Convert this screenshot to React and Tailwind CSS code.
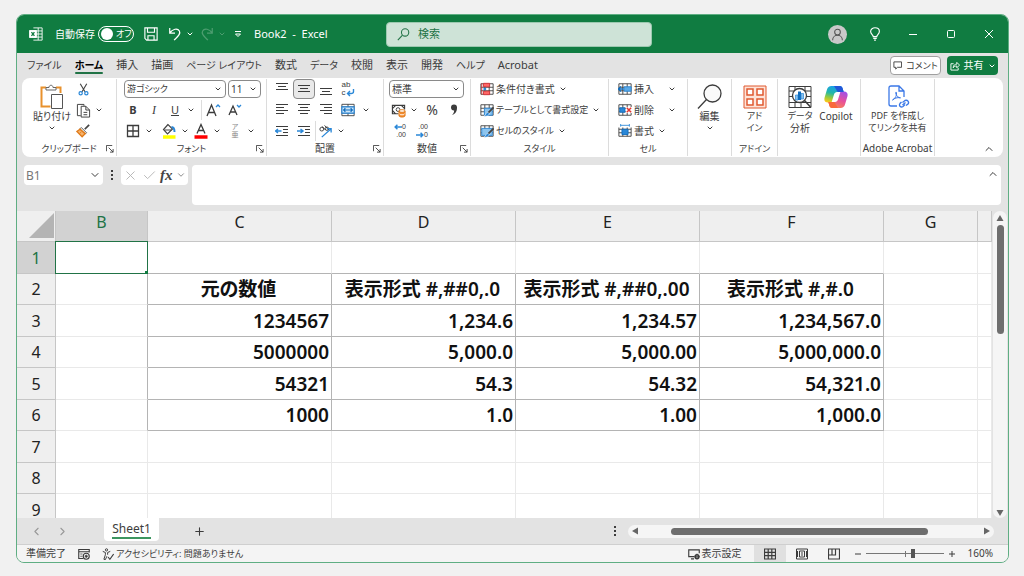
import { useState } from 'react';
import { ChevronDown, ChevronUp, ChevronLeft, ChevronRight, X, Check, Plus } from 'lucide-react';

const TABS = ['ファイル', 'ホーム', '挿入', '描画', 'ページ レイアウト', '数式', 'データ', '校閲', '表示', '開発', 'ヘルプ', 'Acrobat'];

const COLUMNS = ['B', 'C', 'D', 'E', 'F', 'G', ''];

const DATA = {
  2: ['元の数値', '表示形式 #,##0,.0', '表示形式 #,##0,.00', '表示形式 #,#.0'],
  3: ['1234567', '1,234.6', '1,234.57', '1,234,567.0'],
  4: ['5000000', '5,000.0', '5,000.00', '5,000,000.0'],
  5: ['54321', '54.3', '54.32', '54,321.0'],
  6: ['1000', '1.0', '1.00', '1,000.0'],
};

const ROWS = [1, 2, 3, 4, 5, 6, 7, 8, 9];

const isKana = (text) => (text.match(/[ぁ-んァ-ー]/g) || []).length > text.length / 2;

function Icon({ size = 16, box = 16, className = '', children }) {
  return (
    <svg
      width={size}
      height={size}
      viewBox={`0 0 ${box} ${box}`}
      fill="none"
      stroke="currentColor"
      aria-hidden="true"
      className={`shrink-0 ${className}`}
    >
      {children}
    </svg>
  );
}

function Chevron() {
  return <ChevronDown size={8} strokeWidth={3} className="shrink-0" />;
}

/* ---------- ribbon building blocks ---------- */

function Group({ label, className, launcher, children }) {
  return (
    <section className={`flex shrink-0 flex-col py-px ${className}`} aria-label={label || 'グループ'}>
      <div className="flex h-[77px] flex-col border-r border-[#dcdcdc]">
        <div className="flex h-[62px] shrink-0">{children}</div>
        <div
          className={`relative flex h-[15px] shrink-0 items-center justify-center whitespace-nowrap ${
            label && isKana(label) ? 'text-[9px]' : 'text-[10px]'
          }`}
        >
          {label}
          {launcher && (
            <button type="button" aria-label={`${label}の詳細`} className="absolute right-0.5 top-1">
              <Icon size={8} box={9}>
                <path d="M.5 7V.5H7M3 3l5 5M8 4.5V8H4.5" />
              </Icon>
            </button>
          )}
        </div>
      </div>
    </section>
  );
}

function Rows({ className = '', children }) {
  return <div className={`flex flex-col gap-px ${className}`}>{children}</div>;
}

function Row({ className = '', children }) {
  return <div className={`flex h-5 items-center ${className}`}>{children}</div>;
}

function Tool({ label, active, wide, children }) {
  return (
    <button
      type="button"
      aria-label={label}
      className={`flex h-5 items-center justify-center ${wide ? 'w-[22px]' : 'w-[18px]'} ${
        active ? 'rounded border border-[#8a8a8a] bg-[#e9e9e9]' : ''
      }`}
    >
      {children}
    </button>
  );
}

function MenuArrow({ label }) {
  return (
    <button type="button" aria-label={`${label}のメニュー`} className="flex h-5 w-3.5 items-center justify-center">
      <Chevron />
    </button>
  );
}

function Split({ label, wide, children }) {
  return (
    <>
      <Tool label={label} wide={wide}>
        {children}
      </Tool>
      <MenuArrow label={label} />
    </>
  );
}

function Divider() {
  return <span className="h-5 w-px bg-[#dcdcdc]" />;
}

function Select({ label, value, className }) {
  return (
    <div className={`relative flex h-[18px] ${className}`}>
      <select
        aria-label={label}
        defaultValue={value}
        className={`h-full w-full appearance-none rounded border border-[#8a8a8a] bg-white px-0.5 leading-4 ${
          isKana(value) ? 'text-[9px]' : 'text-[10px]'
        }`}
      >
        <option>{value}</option>
      </select>
      <ChevronDown size={8} strokeWidth={3} className="pointer-events-none absolute right-1 top-[5px]" />
    </div>
  );
}

function TextTool({ icon, label, spread }) {
  return (
    <button type="button" className={`flex h-5 items-center whitespace-nowrap ${spread ? 'w-[58px]' : ''}`}>
      {icon}
      <span className={`ml-0.5 ${isKana(label) ? 'text-[9px]' : ''}`}>{label}</span>
      <span className={spread ? 'ml-auto' : 'ml-1'}>
        <Chevron />
      </span>
    </button>
  );
}

function BigTool({ icon, lines, arrow, className }) {
  return (
    <button type="button" className={`flex flex-col items-center ${className}`}>
      <span className="flex h-[31px] items-center justify-center pt-1">{icon}</span>
      {lines.map((line) => (
        <span key={line} className={`h-3 whitespace-nowrap leading-3 ${isKana(line) ? 'text-[9px]' : ''}`}>
          {line}
        </span>
      ))}
      {arrow && (
        <span className="flex h-3 items-center">
          <Chevron />
        </span>
      )}
    </button>
  );
}

function Lines({ rows }) {
  return (
    <Icon size={14} box={14}>
      {rows.map(([x1, x2, y]) => (
        <path key={y} d={`M${x1} ${y}H${x2}`} />
      ))}
    </Icon>
  );
}

/* ---------- icons with colour ---------- */

function PasteIcon() {
  return (
    <Icon size={26} box={26}>
      <path d="M7 3.500H2.500v19h9M17 3.500h4.500V9" stroke="#e8912d" strokeWidth="2" />
      <path d="M7 6V3.500h3C10 .5 14 .5 14 3.500h3V6z" fill="#fff" stroke="#666" />
      <path d="M12.500 10.500h11v14h-11z" fill="#fff" stroke="#555" />
    </Icon>
  );
}

function CutIcon() {
  return (
    <Icon size={13}>
      <path d="M4 1l6 10M12 1L6 11" stroke="#444" strokeWidth="1.400" />
      <circle cx="4.500" cy="12.500" r="2" stroke="#2b88d8" strokeWidth="1.500" />
      <circle cx="11.500" cy="12.500" r="2" stroke="#2b88d8" strokeWidth="1.500" />
    </Icon>
  );
}

function CopyIcon() {
  return (
    <Icon size={15}>
      <path d="M5 13.500H1.500v-12h7V3" />
      <path d="M5.500 3.500h5l4 4v7.500h-9zM10.500 3.500v4h4M8 10h4M8 12.500h4" />
    </Icon>
  );
}

function BrushIcon() {
  return (
    <Icon size={14}>
      <path d="M15 1l-5 5" stroke="#444" strokeWidth="2" />
      <path d="M6 4l6 6-1.500 1.500-6-6z" fill="#fff" stroke="#444" />
      <path d="M4.500 6L1 8.500l6 6 3.500-3.500z" fill="#f7b26a" stroke="#e07b1a" strokeWidth="1.600" />
      <path d="M4 11l2-2" stroke="#e07b1a" />
    </Icon>
  );
}

function FillIcon() {
  return (
    <Icon size={16}>
      <path d="M7 1.500L2.500 6.500l4 4.500 5-5z" fill="#fff" stroke="#444" strokeWidth="1.200" />
      <path d="M3.500 7h7" stroke="#444" />
      <path d="M10.500 4c2.500 0 3 2 3 5" stroke="#2b88d8" strokeWidth="2" />
      <path d="M2 14h12.500" stroke="#ffff00" strokeWidth="3.500" />
    </Icon>
  );
}

function FontColorIcon() {
  return (
    <Icon size={16}>
      <path d="M4 10.500L8 1.500l4 9M5.500 7.500h5" strokeWidth="1.300" />
      <path d="M1.500 14h13" stroke="#f00" strokeWidth="3.500" />
    </Icon>
  );
}

function WrapIcon() {
  return (
    <span className="flex flex-col items-start font-['Liberation_Sans',sans-serif] text-[8px] leading-[8px]">
      <span>ab</span>
      <span className="flex">
        c
        <Icon size={9} box={9}>
          <path d="M7.500 0v2.500Q7.500 4.500 5 4.500H1.500M4 2L1.500 4.500 4 7" stroke="#2b88d8" strokeWidth="1.400" />
        </Icon>
      </span>
    </span>
  );
}

function MergeIcon() {
  return (
    <Icon size={14}>
      <path d="M1 1.500h14v13H1zM1 4.500h14M1 11.500h14M8 1.500v3M8 11.500v3" />
      <path d="M1 4.500h14v7H1z" fill="#cfe6f8" stroke="#2b88d8" strokeWidth="1.400" />
      <path d="M3 8h10M5 6L3 8l2 2M11 6l2 2-2 2" stroke="#0f6cbd" strokeWidth="1.300" />
    </Icon>
  );
}

function IndentIcon({ flip }) {
  return (
    <Icon size={14} box={14}>
      <path d="M1 2.500h12M8 5.500h5M8 8.500h5M1 11.500h12" />
      <path d={flip ? 'M0 7h6M3.500 5L6 7 3.500 9' : 'M6.500 7H1M3 5L.5 7 3 9'} stroke="#2b88d8" strokeWidth="1.500" />
    </Icon>
  );
}

function OrientIcon() {
  return (
    <Icon size={15}>
      <circle cx="4" cy="5.500" r="2" />
      <path d="M4.500 2.500l3.500 4M7 1.500l4.500 5" />
      <circle cx="9.500" cy="5" r="1.800" />
      <path d="M4 14L14 5M10 5h4v4" stroke="#2b88d8" strokeWidth="1.400" />
    </Icon>
  );
}

function CurrencyIcon() {
  return (
    <Icon size={15}>
      <path d="M14.500 7V2.500H1.500v9H8M5 2.500L1.500 6M11 2.500L14.500 6M1.500 8L5 11.500" strokeWidth="1.200" />
      <circle cx="7.500" cy="7" r="2" />
      <path d="M8.500 8.500v5c0 2 6.500 2 6.500 0v-5" fill="#f28a2e" stroke="#e07b1a" />
      <ellipse cx="11.800" cy="8.500" rx="3.200" ry="1.400" fill="#fff" stroke="#e07b1a" />
      <path d="M9 11.500c0 1.500 5.500 1.500 5.500 0" stroke="#fff" />
    </Icon>
  );
}

function DecimalIcon({ less }) {
  const arrow = (
    <Icon size={8} box={7}>
      <path d={less ? 'M0 3.500h6M4 1.500l2 2-2 2' : 'M7 3.500H1M3 1.500l-2 2 2 2'} stroke="#2b88d8" strokeWidth="1.300" />
    </Icon>
  );
  return (
    <span className="flex flex-col items-end font-['Liberation_Sans',sans-serif] text-[7px] leading-[8px]">
      <span className="flex">{less ? '.00' : <>{arrow}0</>}</span>
      <span className="flex">{less ? <>{arrow}0</> : '.00'}</span>
    </span>
  );
}

function TableIcon({ kind }) {
  return (
    <Icon size={14}>
      <path d="M1 2h14v12H1zM1 6h14M1 10h14M5.500 2v12M10.500 2v12" />
      {kind === 'cond' && (
        <>
          <path d="M4 1.500h7v4H4zM4 10.500h7v4H4z" fill="#f66" stroke="#d13438" />
          <path d="M2 1.500v13" stroke="#d13438" />
          <path d="M4 6.500h3v3H4z" fill="#2b88d8" stroke="none" />
        </>
      )}
      {(kind === 'format' || kind === 'style') && (
        <>
          <path d={kind === 'format' ? 'M5 6h9v8H5z' : 'M2 5h12v8H2z'} fill="#8cc4ee" stroke="#2b88d8" />
          <path d="M15.500 5L9 11.500" stroke="#444" strokeWidth="2" />
          <path d="M9 10.500c-2 0-2 3-4.500 4.500 4 .5 6-1 6-3z" fill="#2b88d8" stroke="#fff" strokeWidth=".6" />
        </>
      )}
      {kind === 'insert' && (
        <>
          <path d="M7 5.500h8v5H7z" fill="#5aa9e6" stroke="#2b88d8" />
          <path d="M6.500 8H.5M3.500 5L.5 8l3 3" stroke="#0f6cbd" strokeWidth="1.500" />
        </>
      )}
      {kind === 'delete' && (
        <>
          <path d="M2 5.500h6v5H2z" fill="#2b88d8" stroke="#0f6cbd" />
          <path d="M9 4.500h7v7H9z" fill="#fff" stroke="none" />
          <path d="M10 5.500l5 5M15 5.500l-5 5" stroke="#e3342f" strokeWidth="1.700" />
        </>
      )}
      {kind === 'cell' && (
        <>
          <path d="M4.500 6h7v6h-7z" fill="#2b88d8" stroke="#0f6cbd" />
          <path d="M0 0h16v4H0z" fill="#fff" stroke="none" />
          <path d="M3 1.500h10M3 0v3M13 0v3" stroke="#2b88d8" />
        </>
      )}
    </Icon>
  );
}

function AddInIcon() {
  return (
    <Icon size={24} box={24} className="text-[#e0592f]">
      <path d="M1 1h22v22H1z" fill="#fde3d8" />
      <path d="M4 4h6v6H4zM14 4h6v6h-6zM4 14h6v6H4zM14 14h6v6h-6z" fill="#fff" strokeWidth="1.500" />
    </Icon>
  );
}

function AnalyzeIcon() {
  return (
    <Icon size={24} box={24}>
      <path d="M1 1.500h22v21H1zM1 6h22M1 17.500h22M7 1.500V6M17 1.500V6M1 11.500h4M19 11.500h4M7 18v4M13 18v4" />
      <circle cx="11.500" cy="10.500" r="7" fill="#fff" strokeWidth="1.300" />
      <path d="M16.500 15.500l6 6.500" strokeWidth="1.600" />
      <path d="M7.500 10H10v5H7.500z" fill="#8cc4ee" stroke="#2b88d8" strokeWidth=".7" />
      <path d="M10 6.500h3V15h-3z" fill="#0f6cbd" stroke="none" />
      <path d="M13 8.500h2.500V14H13z" fill="#8cc4ee" stroke="#2b88d8" strokeWidth=".7" />
    </Icon>
  );
}

function CopilotIcon() {
  return (
    <Icon size={24} box={24}>
      <defs>
        <linearGradient id="cpLeft" x1="0.600" y1="0" x2="0.300" y2="1">
          <stop offset="0" stopColor="#1b9df0" />
          <stop offset=".45" stopColor="#22b8a8" />
          <stop offset=".75" stopColor="#9acb3c" />
          <stop offset="1" stopColor="#f8c81c" />
        </linearGradient>
        <linearGradient id="cpRight" x1="0.800" y1="0" x2="0.300" y2="1">
          <stop offset="0" stopColor="#a050e8" />
          <stop offset=".5" stopColor="#e8509a" />
          <stop offset="1" stopColor="#fb8a4a" />
        </linearGradient>
      </defs>
      <g stroke="none">
        <path d="M16 1c1.500 0 2.300 1 2.700 2.500L19.700 7H13c-1.500 0-2.500 1-3 2.500L7.500 17.500H4C1 17.500-.2 15.500.6 12.500L3 4.500C3.700 2.200 5 1 7.500 1z" fill="url(#cpLeft)" />
        <path d="M8 23c-1.500 0-2.300-1-2.700-2.500L4.300 17H11c1.500 0 2.500-1 3-2.500L16.500 6.500H20c3 0 4.200 2 3.400 5L21 19.500c-.7 2.300-2 3.500-4.500 3.500z" fill="url(#cpRight)" />
        <path d="M10 1h6c1.500 0 2.300 1 2.700 2.500L19.700 7H15c-1.500 0-2-.5-2.500-2z" fill="#2257d8" />
        <path d="M14 23H8c-1.500 0-2.300-1-2.700-2.500L4.300 17H9c1.500 0 2 .5 2.500 2z" fill="#f96a3c" />
        <path d="M11 8h4l-2.200 8H9z" fill="#fff" />
      </g>
    </Icon>
  );
}

function PdfIcon() {
  return (
    <Icon size={24} box={24} className="text-[#3b78e7]">
      <path d="M11 21H5Q3 21 3 19V3Q3 1 5 1h8l5 5v6M13 1v5h5" strokeWidth="1.300" />
      <path d="M6.500 15c3-1.500 4.500-5 4-7.500-.6-1-1.200 0-.6 1.500.8 2 2.600 4 4.600 3.800M6.500 15c2-1.800 4.500-2.800 8-2.200" />
      <path d="M15.500 16.500l2.500-2c2.500-1 4.500 1.500 3 3.500l-2 1.500M18 18.500l-2 2c-2 1.500-4.500-.5-3-3l1.500-1.500" transform="translate(1 1)" strokeWidth="1.400" />
      <path d="M16.500 20l3-2.500" strokeWidth="1.300" />
    </Icon>
  );
}

/* ---------- window parts ---------- */

function TitleBar() {
  return (
    <header className="flex h-[38px] shrink-0 items-center bg-[#107c41] text-[11px] text-white">
      <div className="flex w-[369px] shrink-0 items-center whitespace-nowrap pl-3">
        <Icon size={14}>
          <path d="M5 1h10v14H5M5 4.500h10M5 8h10M5 11.500h10M10.500 1v14" />
          <path d="M.5 4h8v8h-8z" fill="#fff" />
          <path d="M2.800 5.800l3.400 4.400M6.200 5.800L2.800 10.200" stroke="#107c41" strokeWidth="1.500" />
        </Icon>
        <label className="ml-3 flex items-center gap-[3px] text-[10px]">
          自動保存
          <input type="checkbox" className="sr-only" />
          <span className="flex h-4 w-9 items-center gap-[3px] rounded-full border border-white pl-0.5 text-[9px]">
            <span className="h-3 w-3 shrink-0 rounded-full bg-white" />
            オフ
          </span>
        </label>
        <button type="button" aria-label="上書き保存" className="ml-2.5">
          <Icon size={14}>
            <path d="M1 1h14v14H3l-2-2zM4 1v5h8V1M4.500 15v-5h7v5" strokeWidth="1.300" />
          </Icon>
        </button>
        <button type="button" aria-label="元に戻す" className="ml-2.5 flex items-center gap-1">
          <Icon size={14}>
            <path d="M2 1v6h6M2 7c3-5 9-6 11-2.500C15 8 11 11 7 15" strokeWidth="1.400" />
          </Icon>
          <Chevron />
        </button>
        <button type="button" aria-label="やり直し" className="ml-1.5 flex items-center gap-1 text-[#4d9d70]">
          <Icon size={14}>
            <path d="M14 1v6H8M14 7C11 2 5 1 3 4.500 1 8 5 11 9 15" strokeWidth="1.400" />
          </Icon>
          <Chevron />
        </button>
        <button type="button" aria-label="クイック アクセス ツール バーのカスタマイズ" className="ml-2">
          <Icon size={8} box={8}>
            <path d="M1 1.500h6M1.500 4h5L4 6.500z" />
          </Icon>
        </button>
        <span className="ml-3 whitespace-pre">Book2  -  Excel</span>
      </div>
      <label className="flex h-[25px] min-w-0 max-w-[266px] flex-1 items-center gap-2 rounded-sm border border-[#9cc9b0] bg-[#cee3d7] px-2.5 text-[#217346]">
        <Icon size={13}>
          <circle cx="10" cy="5.500" r="4.500" strokeWidth="1.300" />
          <path d="M6.500 9L1 15" strokeWidth="1.300" />
        </Icon>
        <input
          type="search"
          aria-label="検索"
          placeholder="検索"
          className="min-w-0 flex-1 bg-transparent text-[11px] outline-none placeholder:text-[#217346]"
        />
      </label>
      <div className="ml-auto flex">
        <button type="button" aria-label="アカウント" className="flex h-9 w-[38px] items-center justify-center">
          <span className="flex h-[19px] w-[19px] items-center justify-center rounded-full bg-[#c9c9c9] text-[#555]">
            <Icon size={13}>
              <circle cx="8" cy="5" r="3.500" strokeWidth="1.300" />
              <path d="M2 15c0-8 12-8 12 0" strokeWidth="1.300" />
            </Icon>
          </span>
        </button>
        <button type="button" aria-label="ヒント" className="flex h-9 w-[38px] items-center justify-center">
          <Icon size={14}>
            <path d="M6 11c0-2-3-3-3-6 0-5.500 10-5.500 10 0 0 3-3 4-3 6zM6 13h4M7 15h2" strokeWidth="1.300" />
          </Icon>
        </button>
        <button type="button" aria-label="最小化" className="flex h-9 w-[38px] items-center justify-center">
          <Icon size={10} box={10}>
            <path d="M1 5.500h8" />
          </Icon>
        </button>
        <button type="button" aria-label="最大化" className="flex h-9 w-[38px] items-center justify-center">
          <Icon size={10} box={10}>
            <rect x="1.500" y="1.500" width="7" height="7" rx="1" />
          </Icon>
        </button>
        <button type="button" aria-label="閉じる" className="flex h-9 w-[38px] items-center justify-center">
          <Icon size={10} box={10}>
            <path d="M1 1l8 8M9 1L1 9" />
          </Icon>
        </button>
      </div>
    </header>
  );
}

function TabBar({ active, onSelect }) {
  return (
    <nav className="flex h-[25px] shrink-0 items-center pl-2.5 pr-2.5 text-[11px]">
      <div className="flex h-full gap-[13px]">
        {TABS.map((tab) => (
          <button
            key={tab}
            type="button"
            onClick={() => onSelect(tab)}
            className={`relative flex h-full items-center whitespace-nowrap ${
              tab === active ? 'font-bold text-black' : ''
            } ${isKana(tab) ? 'text-[10px]' : ''}`}
          >
            {tab}
            {tab === active && <span className="absolute inset-x-0 bottom-1 h-0.5 rounded bg-[#217346]" />}
          </button>
        ))}
      </div>
      <button
        type="button"
        className="ml-auto flex h-[19px] w-[51px] items-center justify-center gap-1 whitespace-nowrap rounded border border-[#a0a0a0] bg-white text-[9px]"
      >
        <Icon size={9} box={10}>
          <path d="M1 1h8.500v6H5L3 9V7H1z" />
        </Icon>
        コメント
      </button>
      <button
        type="button"
        className="ml-1.5 flex h-[19px] w-[51px] items-center justify-center gap-1 whitespace-nowrap rounded bg-[#107c41] text-[10px] text-white"
      >
        <Icon size={10} box={11}>
          <path d="M4 3H1v7h8V7.500M3.500 7.500c0-3 2-4 4-4V1.500L10.500 4.500l-3 3v-2c-2 0-3 .5-4 2z" />
        </Icon>
        共有
        <Chevron />
      </button>
    </nav>
  );
}

function Ribbon() {
  return (
    <div className="mx-[5px] flex h-[79px] shrink-0 rounded-lg bg-white text-[10px]">
      <Group label="クリップボード" launcher className="w-[95px]">
        <BigTool className="ml-2 w-11" icon={<PasteIcon />} lines={['貼り付け']} arrow />
        <Rows>
          <Row>
            <Tool label="切り取り"><CutIcon /></Tool>
          </Row>
          <Row>
            <Split label="コピー"><CopyIcon /></Split>
          </Row>
          <Row>
            <Tool label="書式のコピー"><BrushIcon /></Tool>
          </Row>
        </Rows>
      </Group>

      <Group label="フォント" launcher className="w-[150px]">
        <Rows className="pl-[7px]">
          <Row className="gap-0.5">
            <Select label="フォント名" value="游ゴシック" className="w-[102px]" />
            <Select label="フォント サイズ" value="11" className="w-[33px]" />
          </Row>
          <Row className="gap-[3px]">
            <Tool label="太字"><b className="text-[11px]">B</b></Tool>
            <Tool label="斜体"><i className="font-['Liberation_Serif',serif] text-xs">I</i></Tool>
            <span className="flex">
              <Split label="下線"><u className="text-[11px]">U</u></Split>
            </span>
            <Divider />
            <Tool label="フォント サイズの拡大">
              <Icon>
                <path d="M1 14L5.500 3 10 14M2.500 10.500h6" strokeWidth="1.300" />
                <path d="M10 5l2-2 2 2" stroke="#2b88d8" strokeWidth="1.300" />
              </Icon>
            </Tool>
            <Tool label="フォント サイズの縮小">
              <Icon>
                <path d="M2 13l4-9 4 9M3.500 10h5" strokeWidth="1.300" />
                <path d="M10 3l2 2 2-2" stroke="#2b88d8" strokeWidth="1.300" />
              </Icon>
            </Tool>
          </Row>
          <Row>
            <Split label="罫線">
              <Icon size={14} box={14}>
                <path d="M1.500 1.500h11v11h-11zM7 1.500v11M1.500 7h11" strokeWidth="1.300" />
              </Icon>
            </Split>
            <span className="ml-1"><Divider /></span>
            <Split label="塗りつぶしの色"><FillIcon /></Split>
            <Split label="フォントの色"><FontColorIcon /></Split>
            <span className="mr-0.5"><Divider /></span>
            <Split label="ふりがな">
              <span className="flex flex-col font-['Liberation_Sans','Noto_Sans_CJK_JP',sans-serif] text-[7px] leading-[8px] text-[#888]">
                <span>ア</span>
                <span>亜</span>
              </span>
            </Split>
          </Row>
        </Rows>
      </Group>

      <Group label="配置" launcher className="w-[117px]">
        <Rows className="pl-1">
          <Row>
            <Tool wide label="上揃え"><Lines rows={[[1, 13, 1.5], [3, 11, 4.5], [1, 13, 7.5]]} /></Tool>
            <Tool wide active label="上下中央揃え"><Lines rows={[[1, 13, 3.5], [3, 11, 6.5], [1, 13, 9.5]]} /></Tool>
            <Tool wide label="下揃え"><Lines rows={[[1, 13, 6.5], [3, 11, 9.5], [1, 13, 12.5]]} /></Tool>
            <Tool wide label="折り返して全体を表示する"><WrapIcon /></Tool>
          </Row>
          <Row>
            <Tool wide label="左揃え"><Lines rows={[[1, 13, 1.5], [1, 9, 4.5], [1, 13, 7.5], [1, 9, 10.5]]} /></Tool>
            <Tool wide label="中央揃え"><Lines rows={[[1, 13, 1.5], [3, 11, 4.5], [1, 13, 7.5], [3, 11, 10.5]]} /></Tool>
            <Tool wide label="右揃え"><Lines rows={[[1, 13, 1.5], [5, 13, 4.5], [1, 13, 7.5], [5, 13, 10.5]]} /></Tool>
            <Split wide label="セルを結合して中央揃え"><MergeIcon /></Split>
          </Row>
          <Row>
            <Tool wide label="インデントを減らす"><IndentIcon /></Tool>
            <Tool wide label="インデントを増やす"><IndentIcon flip /></Tool>
            <Divider />
            <Split label="方向"><OrientIcon /></Split>
          </Row>
        </Rows>
      </Group>

      <Group label="数値" launcher className="w-[87px]">
        <Rows className="pl-[5px]">
          <Row>
            <Select label="表示形式" value="標準" className="w-[75px]" />
          </Row>
          <Row>
            <Split label="通貨表示形式"><CurrencyIcon /></Split>
            <Tool wide label="パーセント スタイル"><span className="text-sm leading-5">%</span></Tool>
            <Tool wide label="桁区切りスタイル">
              <Icon size={12} box={12}>
                <path d="M3 3.500a3 3 0 1 1 6 0C9 7 8 9.500 4 11c1.500-1.500 2-2.500 2.200-4.500C4.500 6.700 3 5.500 3 3.500z" fill="currentColor" stroke="none" />
              </Icon>
            </Tool>
          </Row>
          <Row>
            <Tool wide label="小数点以下の表示桁数を増やす"><DecimalIcon /></Tool>
            <Tool wide label="小数点以下の表示桁数を減らす"><DecimalIcon less /></Tool>
          </Row>
        </Rows>
      </Group>

      <Group label="スタイル" className="w-[138px]">
        <Rows className="pl-[9px]">
          <TextTool icon={<TableIcon kind="cond" />} label="条件付き書式" />
          <TextTool icon={<TableIcon kind="format" />} label="テーブルとして書式設定" />
          <TextTool icon={<TableIcon kind="style" />} label="セルのスタイル" />
        </Rows>
      </Group>

      <Group label="セル" className="w-[79px]">
        <Rows className="pl-[9px]">
          <TextTool icon={<TableIcon kind="insert" />} label="挿入" spread />
          <TextTool icon={<TableIcon kind="delete" />} label="削除" spread />
          <TextTool icon={<TableIcon kind="cell" />} label="書式" />
        </Rows>
      </Group>

      <Group className="w-11">
        <BigTool
          className="w-full"
          icon={
            <Icon size={26} box={26}>
              <circle cx="15.500" cy="9.500" r="8.500" fill="#fafafa" strokeWidth="1.300" />
              <path d="M9.500 15.500L1 24.500" strokeWidth="1.300" />
            </Icon>
          }
          lines={['編集']}
          arrow
        />
      </Group>

      <Group label="アドイン" className="w-[46px]">
        <BigTool className="w-full" icon={<AddInIcon />} lines={['アド', 'イン']} />
      </Group>

      <Group className="w-[83px]">
        <BigTool className="ml-1 w-9" icon={<AnalyzeIcon />} lines={['データ', '分析']} />
        <BigTool className="w-9" icon={<CopilotIcon />} lines={['Copilot']} />
      </Group>

      <Group label="Adobe Acrobat" className="w-[74px]">
        <BigTool className="w-full text-[9px]" icon={<PdfIcon />} lines={['PDF を作成し', 'てリンクを共有']} />
      </Group>

      <button type="button" aria-label="リボンを折りたたむ" className="ml-auto mr-2 self-end pb-0.5">
        <ChevronUp size={12} strokeWidth={2} />
      </button>
    </div>
  );
}

function FormulaBar() {
  return (
    <div className="flex h-[54px] shrink-0 items-start pl-[7px] pr-[7px] pt-2">
      <div className="relative flex h-5 w-[79px] rounded-sm bg-white">
        <input
          aria-label="名前ボックス"
          defaultValue="B1"
          className="h-5 w-full bg-transparent px-0.5 text-xs text-[#777] outline-none"
        />
        <ChevronDown size={12} className="pointer-events-none absolute right-0.5 top-1" />
      </div>
      <span className="flex h-5 w-[18px] items-center justify-center">
        <Icon size={10} box={10}>
          <path d="M5 0v2M5 4v2M5 8v2" strokeWidth="2" />
        </Icon>
      </span>
      <div className="flex h-5 w-[67px] items-center justify-between rounded-sm bg-white px-0.5 text-[#b5b5b5]">
        <button type="button" aria-label="キャンセル"><X size={15} strokeWidth={1.5} /></button>
        <button type="button" aria-label="入力"><Check size={15} strokeWidth={1.5} /></button>
        <button
          type="button"
          aria-label="関数の挿入"
          className="flex items-center font-['Liberation_Serif',serif] text-[15px] font-bold italic leading-5 text-[#444]"
        >
          fx
        </button>
        <ChevronDown size={10} className="text-[#777]" />
      </div>
      <div className="relative ml-1 flex h-10 flex-1 rounded-sm bg-white">
        <textarea aria-label="数式バー" className="h-10 w-full resize-none bg-transparent p-1 pr-6 text-xs outline-none" />
        <ChevronUp size={12} className="pointer-events-none absolute right-0.5 top-[3px]" />
      </div>
    </div>
  );
}

function Cell({ row, col }) {
  const values = DATA[row];
  const text = values ? values[col - 1] : undefined;
  const inTable = text !== undefined;

  // the framed block also needs its top and left edges, drawn by the neighbours
  const darkBottom = inTable || (row === 1 && col >= 1 && col <= 4);
  const darkRight = inTable || (values && col === 0);
  const selected = row === 1 && col === 0;

  return (
    <td
      className={`relative whitespace-nowrap border-b border-r p-0 pr-0.5 text-[19px] font-semibold leading-5 text-[#111] ${
        darkBottom ? 'border-b-[#b4b4b4]' : 'border-b-[#e9e9e9]'
      } ${darkRight ? 'border-r-[#b4b4b4]' : 'border-r-[#e9e9e9]'} ${row === 2 ? 'text-center' : 'text-right'}`}
    >
      {text}
      {selected && (
        <span className="absolute -inset-px border border-[#217346]">
          <span className="absolute -bottom-px -right-px h-[3px] w-[3px] bg-[#107c41]" />
        </span>
      )}
    </td>
  );
}

function Sheet() {
  return (
    <div className="flex min-h-0 flex-1">
      <div className="min-w-0 flex-1 overflow-hidden bg-white">
        <table className="w-full table-fixed border-separate border-spacing-0">
          <colgroup>
            <col className="w-[39px]" />
            <col className="w-[92px]" />
            <col className="w-[184px]" />
            <col className="w-[184px]" />
            <col className="w-[184px]" />
            <col className="w-[184px]" />
            <col className="w-[94px]" />
            <col />
          </colgroup>
          <thead>
            <tr className="h-[31px]">
              <td className="border-b border-r border-[#c6c6c6] bg-[#efefef] p-0">
                <Icon size={26} box={26} className="ml-auto">
                  <path d="M25 0v25H0z" fill="#b4b4b4" stroke="none" />
                </Icon>
              </td>
              {COLUMNS.map((name, i) => (
                <th
                  key={i}
                  scope="col"
                  className={`border-b border-r border-[#c6c6c6] p-0 align-top text-base font-normal leading-[22px] ${
                    name === 'B' ? 'bg-[#d2d2d2] text-[#217346]' : 'bg-[#efefef] text-[#222]'
                  }`}
                >
                  {name}
                </th>
              ))}
            </tr>
          </thead>
          <tbody>
            {ROWS.map((row) => (
              <tr key={row} className="odd:h-8 even:h-[31px]">
                <th
                  scope="row"
                  className={`border-b border-r border-[#c6c6c6] p-0 text-base font-normal leading-[22px] ${
                    row === 1 ? 'bg-[#d2d2d2] text-[#217346]' : 'bg-[#efefef] text-[#222]'
                  }`}
                >
                  {row}
                </th>
                {COLUMNS.map((name, col) => (
                  <Cell key={col} row={row} col={col} />
                ))}
              </tr>
            ))}
          </tbody>
        </table>
      </div>
      <div className="flex w-4 shrink-0 px-px">
        <div className="flex w-full flex-col items-center rounded-full bg-[#f5f5f5] pb-px pt-[3px] text-[#666]">
          <Icon size={8} box={8}>
            <path d="M4 1l3.500 6h-7z" fill="currentColor" stroke="none" />
          </Icon>
          <span className="mt-[3px] h-[109px] w-[7px] rounded-full bg-[#6e6e6e]" />
          <Icon size={8} box={8} className="mt-auto">
            <path d="M4 7L.5 1h7z" fill="currentColor" stroke="none" />
          </Icon>
        </div>
      </div>
    </div>
  );
}

function SheetTabs() {
  return (
    <div className="flex h-[26px] shrink-0 items-center pr-3.5">
      <button type="button" aria-label="前のシート" className="ml-[13px] text-[#999]"><ChevronLeft size={13} /></button>
      <button type="button" aria-label="次のシート" className="ml-[13px] text-[#999]"><ChevronRight size={13} /></button>
      <button type="button" className="ml-[35px] flex h-[23px] w-[55px] justify-center self-start rounded-b bg-white text-xs leading-[22px]">
        <span className="h-[21px] border-b-2 border-[#3c9560]">Sheet1</span>
      </button>
      <button type="button" aria-label="新しいシート" className="ml-[34px]"><Plus size={13} strokeWidth={2} /></button>
      <span className="ml-auto mr-2 flex">
        <Icon size={10} box={10}>
          <path d="M5 0v2M5 4v2M5 8v2" strokeWidth="2" />
        </Icon>
      </span>
      <div className="flex h-[13px] w-[366px] items-center rounded-full bg-[#f5f5f5] px-[3px] text-[#666]">
        <Icon size={8} box={8}>
          <path d="M1 4l6-3.500v7z" fill="currentColor" stroke="none" />
        </Icon>
        <span className="ml-8 h-[7px] w-[257px] rounded-full bg-[#6e6e6e]" />
        <Icon size={8} box={8} className="ml-auto">
          <path d="M7 4L1 .5v7z" fill="currentColor" stroke="none" />
        </Icon>
      </div>
    </div>
  );
}

function StatusBar() {
  return (
    <footer className="flex h-[18px] shrink-0 items-center whitespace-nowrap border-t border-[#cfcfcf] bg-[#f4f4f4] pl-[9px] pr-[15px] text-[10px]">
      <span>準備完了</span>
      <button type="button" aria-label="マクロの記録" className="ml-3">
        <Icon size={12}>
          <path d="M15 6V2H1v12h6M1 5h14" strokeWidth="1.500" />
          <path d="M3 8h3M3 11h3" />
          <circle cx="11" cy="11" r="4" strokeWidth="1.500" />
          <circle cx="11" cy="11" r="1.500" fill="currentColor" />
        </Icon>
      </button>
      <button type="button" className="ml-3 flex items-center gap-0.5 text-[9px]">
        <Icon size={12}>
          <circle cx="6" cy="2.500" r="1.500" strokeWidth="1.300" />
          <path d="M1 4.500l3.500 1.500v3L2.500 15l2 .5L6.500 11M11 4.500L7.500 6v3" strokeWidth="1.300" />
          <path d="M8 12l2.500 3L15.500 8" strokeWidth="1.500" />
        </Icon>
        アクセシビリティ: 問題ありません
      </button>
      <button type="button" className="ml-auto flex items-center gap-0.5">
        <Icon size={12}>
          <path d="M15 7V2.500H1v9h7M4 14.500h4" strokeWidth="1.500" />
          <circle cx="12" cy="11.500" r="2.500" strokeWidth="2" />
          <path d="M12 7.500v8M8 11.500h8" />
        </Icon>
        表示設定
      </button>
      <div className="ml-3 flex h-full">
        <button type="button" aria-label="標準" className="flex w-8 items-center justify-center bg-[#e0e0e0]">
          <Icon size={12} box={12}>
            <path d="M.5 1h11v10H.5zM.5 4.300h11M.5 7.700h11M4.200 1v10M7.800 1v10" strokeWidth="1.200" />
          </Icon>
        </button>
        <button type="button" aria-label="ページ レイアウト" className="flex w-8 items-center justify-center">
          <Icon size={12} box={12}>
            <path d="M.5 1h11v10H.5zM3.500 3h5v6h-5zM5 5h2M5 7h2M1.500 3v6M10.500 3v6" />
          </Icon>
        </button>
        <button type="button" aria-label="改ページ プレビュー" className="flex w-8 items-center justify-center">
          <Icon size={12} box={12}>
            <path d="M.5 1h11v10H.5zM.5 7h7V1M4 1v6" strokeWidth="1.200" />
          </Icon>
        </button>
      </div>
      <button type="button" aria-label="縮小" className="ml-1">
        <Icon size={8} box={8}>
          <path d="M1 4h6" />
        </Icon>
      </button>
      <span className="relative mx-1 flex w-[78px] items-center">
        <span className="absolute left-[39px] h-1.5 w-px bg-[#777]" />
        <input
          type="range"
          aria-label="ズーム"
          min="0"
          max="100"
          defaultValue="61"
          className="h-px w-full appearance-none bg-[#777] [&::-webkit-slider-thumb]:h-[9px] [&::-webkit-slider-thumb]:w-1 [&::-webkit-slider-thumb]:appearance-none [&::-webkit-slider-thumb]:bg-[#555]"
        />
      </span>
      <button type="button" aria-label="拡大">
        <Icon size={8} box={8}>
          <path d="M1 4h6M4 1v6" />
        </Icon>
      </button>
      <span className="ml-3">160%</span>
    </footer>
  );
}

function App() {
  const [activeTab, setActiveTab] = useState('ホーム');

  return (
    <div className="flex h-screen bg-[#f1f1f1] pb-[13px] pl-4 pr-[15px] pt-3.5 font-['Noto_Sans','Noto_Sans_CJK_JP',sans-serif] text-[#3c3c3c] [font-feature-settings:'palt']">
      <main className="flex min-w-0 flex-1 flex-col overflow-hidden rounded-lg border border-[#5fae83] bg-[#e3e3e3]">
        <TitleBar />
        <TabBar active={activeTab} onSelect={setActiveTab} />
        <Ribbon />
        <FormulaBar />
        <Sheet />
        <SheetTabs />
        <StatusBar />
      </main>
    </div>
  );
}

export default App;
